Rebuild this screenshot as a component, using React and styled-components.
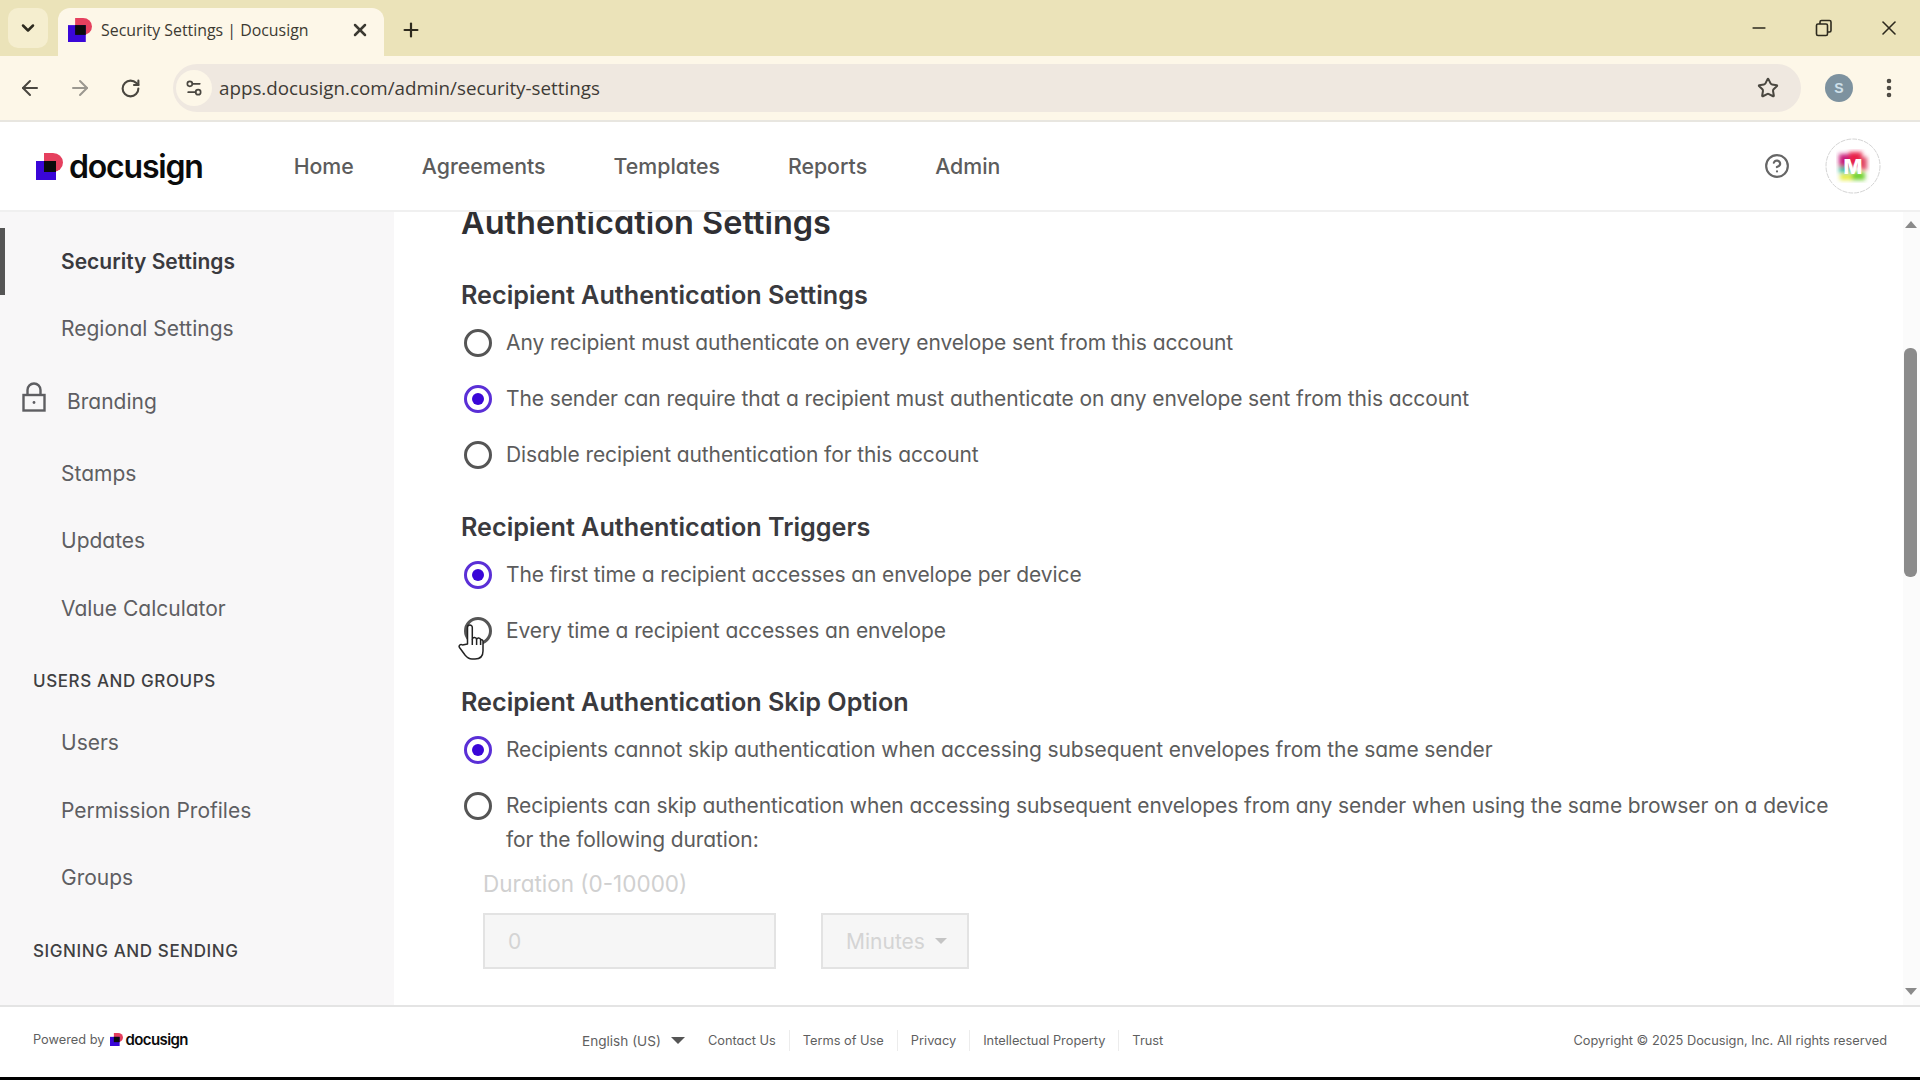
import React from "react";
import styled, { createGlobalStyle } from "styled-components";
import {
  ArrowLeft,
  ArrowRight,
  ChevronDown,
  CircleHelp,
  EllipsisVertical,
  Minus,
  Plus,
  RotateCw,
  Settings2,
  Star,
  X,
} from "lucide-react";

const bodyFont = `Inter, "Noto Sans", sans-serif`;

const GlobalStyle = createGlobalStyle`
  html, body {
    margin: 0;
    padding: 0;
    background: #fff;
    overflow: hidden;
  }
  * {
    box-sizing: border-box;
  }
`;

const Page = styled.div`
  width: 1920px;
  height: 1080px;
  display: flex;
  flex-direction: column;
  font-family: ${bodyFont};
  font-feature-settings: "cv11" 1;
  color: #5a5a5a;
  background: #fff;
`;

/* browser chrome */
const TabStrip = styled.div`
  height: 56px;
  flex: none;
  display: flex;
  align-items: flex-end;
  background: #ebe3b9;
  padding-left: 8px;
  color: #2d2a1e;
`;

const TabListButton = styled.div`
  width: 40px;
  height: 40px;
  margin-bottom: 8px;
  border-radius: 10px;
  background: #f5eecf;
  display: flex;
  align-items: center;
  justify-content: center;
`;

const Tab = styled.div`
  width: 326px;
  height: 48px;
  margin-left: 10px;
  padding: 0 14px 4px 10px;
  border-radius: 12px 12px 0 0;
  background: #fdf7e8;
  display: flex;
  align-items: center;
  font-family: "Open Sans", sans-serif;
  font-size: 15.9px;
  color: #3c3a32;
`;

const TabTitle = styled.span`
  flex: 1;
  margin-left: 9px;
  white-space: nowrap;
`;

const NewTab = styled.div`
  width: 54px;
  height: 48px;
  padding-bottom: 4px;
  display: flex;
  align-items: center;
  justify-content: center;
`;

const WindowButtons = styled.div`
  margin-left: auto;
  margin-right: -1px;
  height: 56px;
  display: flex;
  align-items: center;
`;

const WindowButton = styled.div`
  width: 65px;
  display: flex;
  justify-content: center;
`;

const Toolbar = styled.div`
  height: 66px;
  flex: none;
  display: flex;
  align-items: center;
  background: #fdf7e8;
  border-bottom: 2px solid #e8e6e0;
  padding: 0 0 0 5px;
  color: #4a4740;
`;

const NavButton = styled.div`
  width: 50px;
  display: flex;
  justify-content: center;
  color: ${(p) => (p.$off ? "#9b9890" : "#4a4740")};
`;

const Omnibox = styled.div`
  width: 1628px;
  height: 48px;
  margin-left: 18px;
  border-radius: 24px;
  background: #efe8e0;
  display: flex;
  align-items: center;
  padding: 0 22px 0 3px;
`;

const SiteInfo = styled.div`
  width: 36px;
  height: 36px;
  border-radius: 50%;
  background: #fdf7e8;
  display: flex;
  align-items: center;
  justify-content: center;
`;

const Url = styled.span`
  margin-left: 7px;
  font-family: "Open Sans", sans-serif;
  font-size: 18.8px;
  color: #3e3b36;
  flex: 1;
`;

const ProfileDot = styled.div`
  width: 28px;
  height: 28px;
  margin-left: 24px;
  border-radius: 50%;
  background: #7d929f;
  color: #cfe0ea;
  font: 700 14px "Liberation Sans", sans-serif;
  display: flex;
  align-items: center;
  justify-content: center;
`;

const MenuDots = styled.div`
  margin-left: 24px;
  display: flex;
`;

/* docusign header */
const Header = styled.header`
  height: 90px;
  flex: none;
  display: flex;
  align-items: center;
  background: #fff;
  border-bottom: 2px solid #f0f0f0;
  padding-left: 36px;
`;

const LogoWrap = styled.div`
  display: flex;
  align-items: center;
  gap: ${(p) => (p.$small ? "3px" : "6px")};
`;

const LogoText = styled.span`
  font-family: Inter, sans-serif;
  font-feature-settings: normal;
  font-weight: 600;
  color: #0b0b0b;
  letter-spacing: ${(p) => (p.$small ? "-0.6px" : "-1.2px")};
  font-size: ${(p) => (p.$small ? "15px" : "32px")};
`;

const Nav = styled.nav`
  margin-left: 91px;
  display: flex;
  gap: 68px;
`;

const NavLink = styled.span`
  font-size: 21.3px;
  font-weight: 500;
  color: #5c5c5c;
`;

const HeaderRight = styled.div`
  margin-left: auto;
  padding-right: 39px;
  display: flex;
  align-items: center;
  gap: 35px;
  color: #666;
`;

const Avatar = styled.div`
  width: 56px;
  height: 56px;
  display: flex;
`;

/* body */
const Body = styled.div`
  flex: 1;
  min-height: 0;
  display: flex;
  overflow: hidden;
`;

const Sidebar = styled.aside`
  width: 394px;
  flex: none;
  background: #f8f7f8;
  padding-top: 15.5px;
  overflow: hidden;
`;

const SideItem = styled.div`
  height: ${(p) => (p.$tall ? "77px" : "67.5px")};
  display: flex;
  align-items: center;
  padding-left: ${(p) => (p.$locked ? "22px" : p.$active ? "56px" : "61px")};
  font-size: 21px;
  font-weight: ${(p) => (p.$active ? 600 : 400)};
  color: ${(p) => (p.$active ? "#3a3a3e" : "#5e5e62")};
  border-left: ${(p) => (p.$active ? "5px solid #555" : "none")};
`;

const LockIcon = styled.span`
  display: flex;
  margin: -8px 21px 0 0;
`;

const SideHeading = styled.div`
  height: 67px;
  display: flex;
  align-items: flex-end;
  padding: 0 0 18px 33px;
  font-size: 17px;
  line-height: 20px;
  font-weight: 500;
  letter-spacing: 0.6px;
  color: #3f3f42;
`;

const Main = styled.main`
  flex: 1;
  position: relative;
  overflow: hidden;
  padding-left: 67px;
`;

const Title = styled.h2`
  margin: -11px 0 30px;
  font-size: 32.5px;
  line-height: 44px;
  font-weight: 600;
  color: #2f2f33;
`;

const Group = styled.section`
  margin-bottom: 23px;
`;

const GroupTitle = styled.h3`
  margin: 0;
  font-size: 25.2px;
  line-height: 40px;
  font-weight: 600;
  color: #3a3a3e;
`;

const OptionRow = styled.div`
  display: flex;
  align-items: flex-start;
  padding: 11.1px 0;
  max-width: 1375px;
`;

const Radio = styled.span`
  width: 28px;
  height: 28px;
  flex: none;
  margin: 3px 14px 0 3px;
  border-radius: 50%;
  border: 3px solid ${(p) => (p.$on ? "#5a2fd6" : "#555")};
  display: flex;
  align-items: center;
  justify-content: center;

  &::after {
    content: "";
    width: 12px;
    height: 12px;
    border-radius: 50%;
    background: ${(p) => (p.$on ? "#3a06d8" : "transparent")};
  }
`;

const OptionText = styled.span`
  font-size: 21px;
  line-height: 34px;
  letter-spacing: -0.1px;
  color: #5c5c5c;
`;

const DurationBlock = styled.div`
  margin: 1px 0 0 22px;
  color: #d0d0d0;
`;

const DurationLabel = styled.div`
  font-size: 22.5px;
  line-height: 30px;
  margin-bottom: 14px;
`;

const DurationControls = styled.div`
  display: flex;
  gap: 45px;
`;

const DisabledBox = styled.div`
  width: ${(p) => p.$w}px;
  height: 56px;
  background: #f6f6f6;
  border: 2px solid #e3e3e3;
  display: flex;
  align-items: center;
  justify-content: space-between;
  padding: 0 20px 0 23px;
  font-size: 21px;
  color: #d4d4d4;
`;

const Caret = styled.span`
  width: 0;
  height: 0;
  border-left: ${(p) => p.$s}px solid transparent;
  border-right: ${(p) => p.$s}px solid transparent;
  border-top: ${(p) => p.$s}px solid ${(p) => p.$c};
`;

const ScrollTrack = styled.div`
  position: absolute;
  top: 0;
  right: 0;
  bottom: 0;
  width: 17px;
  padding: 9px 2px 10px 0;
  background: #fbfbfb;
  display: flex;
  flex-direction: column;
  align-items: center;
`;

const ScrollArrow = styled.span`
  width: 0;
  height: 0;
  border-left: 6px solid transparent;
  border-right: 6px solid transparent;
  ${(p) => (p.$up ? "border-bottom: 7px solid #8a8a8a;" : "border-top: 7px solid #8a8a8a;")}
`;

const ScrollThumb = styled.div`
  width: 13px;
  height: 229px;
  margin-top: 120px;
  margin-bottom: auto;
  border-radius: 6px;
  background: #8b8b8b;
`;

const HandCursor = styled.div`
  position: absolute;
  left: 64px;
  top: 411px;
  display: flex;
`;

/* footer */
const Footer = styled.footer`
  height: 72px;
  flex: none;
  display: flex;
  align-items: center;
  background: #fff;
  border-top: 2px solid #e4e4e4;
  padding: 0 33px 3px;
  font-size: 12.8px;
  color: #5f5f5f;
`;

const Powered = styled.div`
  display: flex;
  align-items: center;
  gap: 5px;
  width: 549px;
  margin-top: -3px;
`;

const FooterLinks = styled.div`
  display: flex;
  align-items: center;
`;

const Language = styled.div`
  display: flex;
  align-items: center;
  gap: 10px;
  margin-right: 10px;
  font-size: 13.6px;
`;

const FooterLink = styled.span`
  padding: 3px 13px;
  border-left: 1px solid #ececec;
  &:first-of-type {
    border-left: none;
  }
`;

const Copyright = styled.span`
  margin-left: auto;
`;

const BottomEdge = styled.div`
  height: 3px;
  flex: none;
  background: #000;
`;

const Logo = ({ size }) => (
  <svg width={size} height={size} viewBox="0 0 27 27">
    <path d="M8 0h9a10 9.5 0 0 1 0 19H8z" fill="#e5405e" />
    <rect x="0" y="8" width="20" height="19" fill="#3a06d8" />
    <rect x="8" y="8" width="12" height="11" fill="#0b0b0b" />
  </svg>
);

const RestoreIcon = () => (
  <svg width="18" height="18" viewBox="0 0 18 18" fill="none" stroke="#2d2a1e" strokeWidth="1.6">
    <rect x="1.5" y="5" width="11" height="11.5" rx="1.5" />
    <path d="M5 5V3a1.5 1.5 0 0 1 1.5-1.5h8A1.5 1.5 0 0 1 16 3v8.5a1.5 1.5 0 0 1-1.5 1.5h-2" />
  </svg>
);

const Padlock = () => (
  <svg width="24" height="30" viewBox="0 0 24 30" fill="none" stroke="#5e5e62" strokeWidth="2.4">
    <rect x="1.5" y="13" width="21" height="15.5" />
    <path d="M5.5 13V8a6.5 6.5 0 0 1 13 0v5" />
    <circle cx="12" cy="20.5" r="1.4" fill="#5e5e62" stroke="none" />
  </svg>
);

const Hand = () => (
  <svg width="26" height="38" viewBox="0 0 26 38" fill="#fff" stroke="#222" strokeWidth="1.5" strokeLinejoin="round">
    <path d="M9.5 21V4.5a2.4 2.4 0 0 1 4.8 0V16a2.2 2.2 0 0 1 4.3.3a2.1 2.1 0 0 1 4 .4a1.9 1.9 0 0 1 2.4 1.6V28c0 5-3 8-8 8h-3c-3 0-5-1.5-7-4L1.5 24.5c-1.2-1.8 1-4 3-2.5z" />
    <path d="M14.3 16v6M18.6 16.3V22M22.6 16.7V22" fill="none" />
  </svg>
);

const AccountAvatar = () => (
  <svg width="56" height="56" viewBox="0 0 56 56">
    <defs>
      <filter id="smear">
        <feGaussianBlur stdDeviation="2" />
      </filter>
    </defs>
    <circle cx="28" cy="28" r="27" fill="#fff" stroke="#d4d4d4" strokeWidth="1" strokeDasharray="5 1" />
    <g filter="url(#smear)">
      <rect x="14" y="16" width="15" height="13" fill="#c81e7a" />
      <rect x="24" y="14" width="13" height="14" fill="#e8234a" />
      <rect x="35" y="19" width="7" height="13" fill="#e04a68" />
      <rect x="14" y="29" width="12" height="6" fill="#2fc4a8" />
      <rect x="15" y="36" width="13" height="6" fill="#e4ec3a" />
      <rect x="27" y="34" width="13" height="8" fill="#6fd02e" />
    </g>
    <text x="28" y="36" textAnchor="middle" fontFamily="Inter, sans-serif" fontWeight="800" fontSize="20" fill="#fff">
      M
    </text>
  </svg>
);

const sections = [
  {
    title: "Recipient Authentication Settings",
    options: [
      { text: "Any recipient must authenticate on every envelope sent from this account" },
      { text: "The sender can require that a recipient must authenticate on any envelope sent from this account", on: true },
      { text: "Disable recipient authentication for this account" },
    ],
  },
  {
    title: "Recipient Authentication Triggers",
    options: [
      { text: "The first time a recipient accesses an envelope per device", on: true },
      { text: "Every time a recipient accesses an envelope" },
    ],
  },
];

const footerLinks = ["Contact Us", "Terms of Use", "Privacy", "Intellectual Property", "Trust"];

const App = () => {
  return (
    <Page>
      <GlobalStyle />
      <TabStrip>
        <TabListButton>
          <ChevronDown size={20} strokeWidth={3} />
        </TabListButton>
        <Tab>
          <Logo size={24} />
          <TabTitle>Security Settings | Docusign</TabTitle>
          <X size={20} strokeWidth={3} />
        </Tab>
        <NewTab>
          <Plus size={22} strokeWidth={2.4} />
        </NewTab>
        <WindowButtons>
          <WindowButton>
            <Minus size={20} />
          </WindowButton>
          <WindowButton>
            <RestoreIcon />
          </WindowButton>
          <WindowButton>
            <X size={24} strokeWidth={1.6} />
          </WindowButton>
        </WindowButtons>
      </TabStrip>
      <Toolbar>
        <NavButton>
          <ArrowLeft size={24} />
        </NavButton>
        <NavButton $off>
          <ArrowRight size={24} />
        </NavButton>
        <NavButton>
          <RotateCw size={21} strokeWidth={2.4} />
        </NavButton>
        <Omnibox>
          <SiteInfo>
            <Settings2 size={20} />
          </SiteInfo>
          <Url>apps.docusign.com/admin/security-settings</Url>
          <Star size={22} strokeWidth={2.2} />
        </Omnibox>
        <ProfileDot>S</ProfileDot>
        <MenuDots>
          <EllipsisVertical size={24} strokeWidth={2.6} />
        </MenuDots>
      </Toolbar>
      <Header>
        <LogoWrap>
          <Logo size={27} />
          <LogoText>docusign</LogoText>
        </LogoWrap>
        <Nav>
          <NavLink>Home</NavLink>
          <NavLink>Agreements</NavLink>
          <NavLink>Templates</NavLink>
          <NavLink>Reports</NavLink>
          <NavLink>Admin</NavLink>
        </Nav>
        <HeaderRight>
          <CircleHelp size={26} strokeWidth={2} />
          <Avatar>
            <AccountAvatar />
          </Avatar>
        </HeaderRight>
      </Header>
      <Body>
        <Sidebar>
          <SideItem $active>Security Settings</SideItem>
          <SideItem>Regional Settings</SideItem>
          <SideItem $tall $locked>
            <LockIcon>
              <Padlock />
            </LockIcon>
            Branding
          </SideItem>
          <SideItem>Stamps</SideItem>
          <SideItem>Updates</SideItem>
          <SideItem>Value Calculator</SideItem>
          <SideHeading>USERS AND GROUPS</SideHeading>
          <SideItem>Users</SideItem>
          <SideItem>Permission Profiles</SideItem>
          <SideItem>Groups</SideItem>
          <SideHeading>SIGNING AND SENDING</SideHeading>
          <SideItem $tall>Signing Settings</SideItem>
        </Sidebar>
        <Main>
          <Title>Authentication Settings</Title>
          {sections.map((section) => (
            <Group key={section.title}>
              <GroupTitle>{section.title}</GroupTitle>
              {section.options.map((option) => (
                <OptionRow key={option.text}>
                  <Radio $on={option.on} />
                  <OptionText>{option.text}</OptionText>
                </OptionRow>
              ))}
            </Group>
          ))}
          <Group>
            <GroupTitle>Recipient Authentication Skip Option</GroupTitle>
            <OptionRow>
              <Radio $on />
              <OptionText>Recipients cannot skip authentication when accessing subsequent envelopes from the same sender</OptionText>
            </OptionRow>
            <OptionRow>
              <Radio />
              <OptionText>
                Recipients can skip authentication when accessing subsequent envelopes from any sender when using the same browser on a device for the following duration:
              </OptionText>
            </OptionRow>
            <DurationBlock>
              <DurationLabel>Duration (0-10000)</DurationLabel>
              <DurationControls>
                <DisabledBox $w={293}>0</DisabledBox>
                <DisabledBox $w={148}>
                  Minutes
                  <Caret $s={6} $c="#c4c4c4" />
                </DisabledBox>
              </DurationControls>
            </DurationBlock>
          </Group>
          <HandCursor>
            <Hand />
          </HandCursor>
          <ScrollTrack>
            <ScrollArrow $up />
            <ScrollThumb />
            <ScrollArrow />
          </ScrollTrack>
        </Main>
      </Body>
      <Footer>
        <Powered>
          Powered by
          <LogoWrap $small>
            <Logo size={13} />
            <LogoText $small>docusign</LogoText>
          </LogoWrap>
        </Powered>
        <FooterLinks>
          <Language>
            English (US)
            <Caret $s={7} $c="#555" />
          </Language>
          {footerLinks.map((link) => (
            <FooterLink key={link}>{link}</FooterLink>
          ))}
        </FooterLinks>
        <Copyright>Copyright © 2025 Docusign, Inc. All rights reserved</Copyright>
      </Footer>
      <BottomEdge />
    </Page>
  );
};

export default App;
